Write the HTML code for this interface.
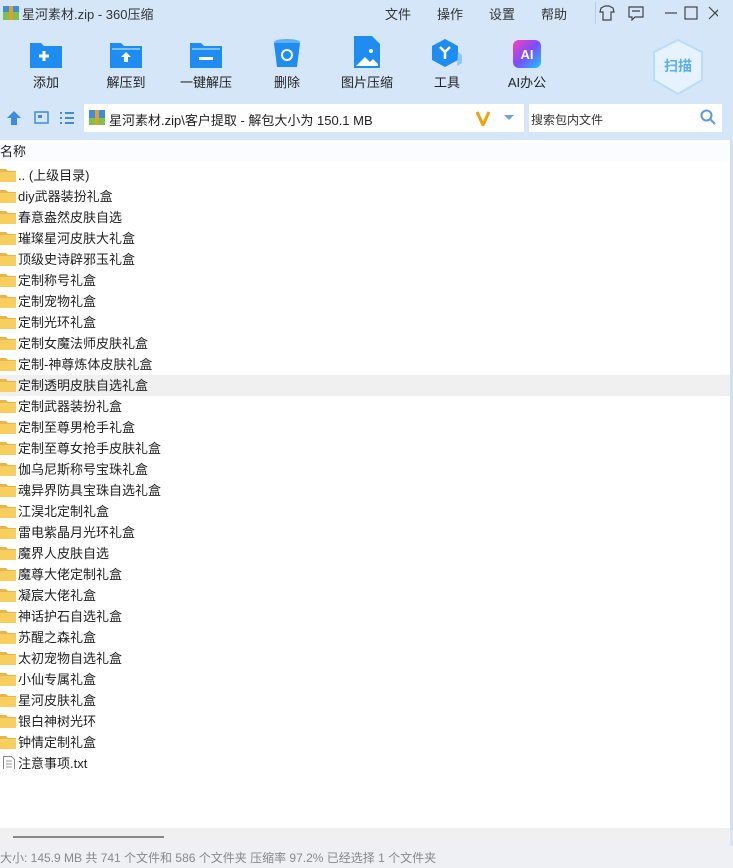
<!DOCTYPE html>
<html><head><meta charset="utf-8"><style>
*{margin:0;padding:0;box-sizing:border-box}
body{width:733px;height:868px;overflow:hidden;background:#d5e6f8;font-family:"Liberation Sans","Noto Sans CJK SC",sans-serif;position:relative;color:#222}
.abs{position:absolute}
.title{left:22px;top:4px;font-size:13px;color:#333}
.menu{top:4px;font-size:13px;color:#333}
.tb{top:32px;width:80px;text-align:center;font-size:13px;color:#222}
.tb .ic{height:36px;display:flex;justify-content:center;align-items:flex-end;margin-bottom:4px}
.list{left:0;top:140px;width:730px;height:688px;background:#fff}
.row{position:absolute;left:0;width:730px;height:21px;font-size:13px;line-height:21px;padding-left:18px;white-space:nowrap}
.fold{position:absolute;left:0;top:4px;width:16px;height:13px}
</style></head><body>
<svg class="abs" style="left:3px;top:6px" width="16" height="14"><rect x="0" y="0" width="16" height="14" fill="#3c8de0"/><rect x="0" y="6" width="16" height="8" fill="#7cc24e"/><rect x="6" y="0" width="4" height="14" fill="#e0a030"/></svg>
<div class="abs title">星河素材.zip - 360压缩</div>
<div class="abs menu" style="left:385px">文件</div>
<div class="abs menu" style="left:437px">操作</div>
<div class="abs menu" style="left:489px">设置</div>
<div class="abs menu" style="left:541px">帮助</div>
<div class="abs" style="left:595px;top:2px;width:1px;height:22px;background:#b8cde4"></div>
<svg class="abs" style="left:598px;top:5px" width="120" height="16" fill="none" stroke="#444" stroke-width="1.2"><path d="M3 3l4-2h4l4 2 1 4-3 0v8H5V7H2z"/><path d="M31 2h14v10h-8l-3 3v-3h-3z M34 6h8"/><path d="M67 8h12"/><rect x="87" y="2" width="12" height="12"/><path d="M111 2l12 12M123 2l-12 12"/></svg>

<div class="abs tb" style="left:6px"><div class="ic"><svg width="32" height="28"><path d="M0 3h11l3 3h18v22H0z" fill="#1e8cf0"/><path d="M14 11v10M9 16h10" stroke="#fff" stroke-width="3"/></svg></div>添加</div>
<div class="abs tb" style="left:86px"><div class="ic"><svg width="32" height="28"><path d="M0 3h11l3 3h18v22H0z" fill="#1e8cf0"/><rect x="2" y="8" width="28" height="2" fill="#7cc0ff"/><path d="M16 12l-5 5h3v5h4v-5h3z" fill="#fff"/></svg></div>解压到</div>
<div class="abs tb" style="left:166px"><div class="ic"><svg width="32" height="28"><path d="M0 3h11l3 3h18v22H0z" fill="#1e8cf0"/><rect x="2" y="8" width="28" height="2" fill="#7cc0ff"/><rect x="9" y="17" width="14" height="3" fill="#fff"/></svg></div>一键解压</div>
<div class="abs tb" style="left:247px"><div class="ic"><svg width="28" height="30"><ellipse cx="14" cy="4" rx="13" ry="3" fill="#5ab0ff"/><path d="M1 5h26l-3 24H4z" fill="#1e8cf0"/><circle cx="14" cy="17" r="5" fill="none" stroke="#fff" stroke-width="2"/></svg></div>删除</div>
<div class="abs tb" style="left:327px"><div class="ic"><svg width="26" height="32"><path d="M0 0h18l8 8v24H0z" fill="#1e8cf0"/><path d="M2 30l9-9 5 5 3-3 5 5v2z" fill="#fff"/><circle cx="17" cy="15" r="2" fill="#fff"/></svg></div>图片压缩</div>
<div class="abs tb" style="left:407px"><div class="ic"><svg width="32" height="30"><path d="M14 1l13 7v14l-13 7-13-7V8z" fill="#1e8cf0"/><path d="M27 14l4 3v8l-5 3" fill="#8ec6ff"/><path d="M9 9l5 5 5-5M14 14v7" stroke="#fff" stroke-width="2.5" fill="none"/></svg></div>工具</div>
<div class="abs tb" style="left:487px"><div class="ic"><svg width="28" height="28"><defs><linearGradient id="g" x1="0" y1="0" x2="1" y2="1"><stop offset="0" stop-color="#ff3fb5"/><stop offset=".5" stop-color="#7a4cff"/><stop offset="1" stop-color="#19c8ff"/></linearGradient></defs><rect width="28" height="28" rx="6" fill="url(#g)"/><text x="14" y="19" font-size="13" font-weight="bold" fill="#fff" text-anchor="middle" font-family="Liberation Sans">AI</text></svg></div>AI办公</div>
<svg class="abs" style="left:650px;top:38px" width="56" height="58"><path d="M28 2l24 12v28L28 56 4 42V14z" fill="#e6f2ff" stroke="#b8dcfa" stroke-width="2"/><text x="28" y="33" font-size="14" font-weight="bold" fill="#5aaef0" text-anchor="middle" font-family="Noto Sans CJK SC">扫描</text></svg>

<svg class="abs" style="left:7px;top:110px" width="70" height="16"><path d="M7 1l7 7h-4v7H4V8H0z" fill="#3c8de0"/><rect x="28" y="2" width="13" height="11" fill="none" stroke="#3c8de0" stroke-width="1.5"/><rect x="31" y="5" width="4" height="3" fill="#3c8de0"/><path d="M53 3h2M53 8h2M53 13h2M58 3h9M58 8h9M58 13h9" stroke="#3c8de0" stroke-width="2"/></svg>
<div class="abs" style="left:84px;top:104px;width:440px;height:28px;background:#fff"></div>
<svg class="abs" style="left:89px;top:110px" width="16" height="15"><rect width="16" height="15" fill="#3c8de0"/><rect y="8" width="16" height="7" fill="#7cc24e"/><rect x="6" width="4" height="15" fill="#e0a030"/></svg>
<div class="abs" style="left:109px;top:110px;font-size:13px">星河素材.zip\客户提取 - 解包大小为 150.1 MB</div>
<svg class="abs" style="left:476px;top:110px" width="44" height="16"><path d="M1 2l6 13 6-13" stroke="#f5a000" stroke-width="3" fill="none"/><path d="M28 5h10l-5 5z" fill="#6ea2e0"/></svg>
<div class="abs" style="left:529px;top:104px;width:193px;height:28px;background:#fff"></div>
<div class="abs" style="left:531px;top:111px;font-size:12px;color:#333">搜索包内文件</div>
<svg class="abs" style="left:700px;top:109px" width="16" height="16" fill="none" stroke="#5a9ae0" stroke-width="2"><circle cx="6.5" cy="6.5" r="5"/><path d="M10 10l5 5"/></svg>

<div class="abs list">
<div class="row" style="top:3px;padding-left:0;height:18px;line-height:18px;background:#fafcff">名称</div>
<div class="row" style="top:235px;background:#f0f0f0"></div>
</div>
<div id="rows"></div>
<div class="abs" style="left:730px;top:140px;width:3px;height:690px;background:#cfe0f4"></div>
<div class="abs" style="left:0;top:828px;width:730px;height:18px;background:#f0f0f0"></div>
<div class="abs" style="left:13px;top:836px;width:151px;height:2px;background:#888"></div>
<div class="abs" style="left:0;top:846px;width:733px;height:22px;background:#eef0f3"></div>
<div class="abs" style="left:0;top:849px;font-size:12px;color:#888">大小: 145.9 MB 共 741 个文件和 586 个文件夹 压缩率 97.2% 已经选择 1 个文件夹</div>
<script>
var n=[".. (上级目录)","diy武器装扮礼盒","春意盎然皮肤自选","璀璨星河皮肤大礼盒","顶级史诗辟邪玉礼盒","定制称号礼盒","定制宠物礼盒","定制光环礼盒","定制女魔法师皮肤礼盒","定制-神尊炼体皮肤礼盒","定制透明皮肤自选礼盒","定制武器装扮礼盒","定制至尊男枪手礼盒","定制至尊女抢手皮肤礼盒","伽乌尼斯称号宝珠礼盒","魂异界防具宝珠自选礼盒","江淏北定制礼盒","雷电紫晶月光环礼盒","魔界人皮肤自选","魔尊大佬定制礼盒","凝宸大佬礼盒","神话护石自选礼盒","苏醒之森礼盒","太初宠物自选礼盒","小仙专属礼盒","星河皮肤礼盒","银白神树光环","钟情定制礼盒","注意事项.txt"];
var h="";
n.forEach(function(t,i){var y=165+i*21;
var ic=i==28?'<svg class="fold" style="left:3px;top:3px" width="12" height="15"><path d="M.5 .5h8l3 3v11H.5z" fill="#fff" stroke="#888"/><path d="M3 5h6M3 8h6M3 11h6" stroke="#999"/></svg>':'<svg class="fold" width="16" height="13"><path d="M0 0h6l2 2h8v11H0z" fill="#e8b64a"/><rect y="3" width="16" height="10" fill="#f8cf5e"/></svg>';
h+='<div class="row" style="top:'+y+'px">'+ic+t+'</div>';});
document.getElementById("rows").innerHTML=h;
</script>
</body></html>
